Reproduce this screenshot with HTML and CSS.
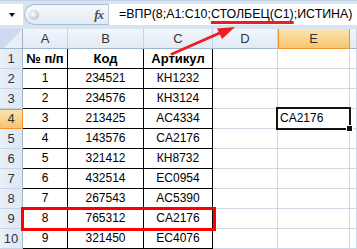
FILE: index.html
```html
<!DOCTYPE html>
<html lang="ru">
<head>
    <meta charset="UTF-8">
    <title>ВПР</title>
    <link rel="stylesheet" href="styles.css">
</head>
<body>
    <div class="fbar">
        <div class="namebox"><span class="drop"></span></div>
        <div class="fx-pill"><span class="grip"></span><span class="fx">fx</span></div>
        <div class="formula">=ВПР(8;A1:C10;<span class="mark">СТОЛБЕЦ(C1)</span>;ИСТИНА)</div>
    </div>

    <div class="sheet">
        <div class="row head">
            <div class="corner"></div>
            <div class="ch">A</div>
            <div class="ch">B</div>
            <div class="ch">C</div>
            <div class="ch">D</div>
            <div class="ch sel">E</div>
            <div class="ch"></div>
        </div>
        <div class="row">
            <div class="rh">1</div>
            <div class="c t b">№ п/п</div>
            <div class="c t b">Код</div>
            <div class="c t b">Артикул</div>
            <div class="c"></div><div class="c"></div><div class="c"></div>
        </div>
        <div class="row">
            <div class="rh">2</div>
            <div class="c t">1</div><div class="c t">234521</div><div class="c t">КН1232</div>
            <div class="c"></div><div class="c"></div><div class="c"></div>
        </div>
        <div class="row">
            <div class="rh">3</div>
            <div class="c t">2</div><div class="c t">234576</div><div class="c t">КН3124</div>
            <div class="c"></div><div class="c"></div><div class="c"></div>
        </div>
        <div class="row">
            <div class="rh sel">4</div>
            <div class="c t">3</div><div class="c t">213425</div><div class="c t">AC4334</div>
            <div class="c"></div><div class="c active">CA2176</div><div class="c"></div>
        </div>
        <div class="row">
            <div class="rh">5</div>
            <div class="c t">4</div><div class="c t">143576</div><div class="c t">CA2176</div>
            <div class="c"></div><div class="c"></div><div class="c"></div>
        </div>
        <div class="row">
            <div class="rh">6</div>
            <div class="c t">5</div><div class="c t">321412</div><div class="c t">КН8732</div>
            <div class="c"></div><div class="c"></div><div class="c"></div>
        </div>
        <div class="row">
            <div class="rh">7</div>
            <div class="c t">6</div><div class="c t">432514</div><div class="c t">EC0954</div>
            <div class="c"></div><div class="c"></div><div class="c"></div>
        </div>
        <div class="row">
            <div class="rh">8</div>
            <div class="c t">7</div><div class="c t">267543</div><div class="c t">AC5390</div>
            <div class="c"></div><div class="c"></div><div class="c"></div>
        </div>
        <div class="row hit">
            <div class="rh">9</div>
            <div class="c t">8</div><div class="c t">765312</div><div class="c t">CA2176</div>
            <div class="c"></div><div class="c"></div><div class="c"></div>
        </div>
        <div class="row">
            <div class="rh">10</div>
            <div class="c t">9</div><div class="c t">321450</div><div class="c t">EC4076</div>
            <div class="c"></div><div class="c"></div><div class="c"></div>
        </div>
    </div>

    <!-- annotation arrow -->
    <svg class="arrow" width="357" height="249" viewBox="0 0 357 249">
        <line x1="172" y1="54" x2="222" y2="32" stroke="#ee1c24" stroke-width="3" stroke-linecap="round"/>
        <polygon points="235,27 217,28.5 222,39" fill="#ee1c24"/>
    </svg>
</body>
</html>
```

FILE: styles.css
```css
body {
    margin: 0;
    width: 357px;
    height: 249px;
    overflow: hidden;
    position: relative;
    background: #fff;
    font-family: "Liberation Sans", Arial, sans-serif;
    color: #000;
}

/* Formula bar */
.fbar {
    display: flex;
    height: 29px;
    box-sizing: border-box;
    padding: 3px 0 4px;
    background: #d9e4f1;
    border-top: 1px solid #c3d3e7;
}

.namebox {
    width: 23px;
    background: #fff;
    position: relative;
}

.drop {
    position: absolute;
    left: 9px;
    top: 9px;
    border-left: 3px solid transparent;
    border-right: 3px solid transparent;
    border-top: 4px solid #111;
}

.fx-pill {
    width: 84px;
    margin-left: 1px;
    display: flex;
    align-items: center;
    justify-content: space-between;
    box-sizing: border-box;
    padding: 0 5px 0 4px;
    border: 1px solid #a7bcd6;
    border-right: none;
    border-radius: 11px 0 0 11px;
    background: linear-gradient(#f7f9fc, #e3eaf3);
}

.grip {
    width: 10px;
    height: 10px;
    border-radius: 50%;
    background: radial-gradient(circle at 40% 40%, #ffffff, #c9ced6 60%, #a9b0ba);
}

.fx {
    font-family: "Liberation Serif", serif;
    font-style: italic;
    font-weight: bold;
    font-size: 13px;
    letter-spacing: -1px;
    color: #4d4d4d;
}

.formula {
    flex: 1;
    background: #fff;
    border-left: 1px solid #b8c9de;
    padding-left: 10px;
    font-size: 12.4px;
    line-height: 21px;
    white-space: nowrap;
    color: #000;
}

.mark {
    text-decoration: underline #ee1c24 3px;
    text-underline-offset: 3px;
}

/* Sheet grid */
.row {
    display: grid;
    grid-template-columns: 23px 45px 76px 69px 65px 72px 1fr;
    height: 20px;
}

.row > div {
    box-sizing: border-box;
    border-right: 1px solid #d0d7e5;
    border-bottom: 1px solid #d0d7e5;
    font-size: 12px;
    line-height: 19px;
    white-space: nowrap;
}

.head > div {
    background: linear-gradient(#f2f6fb, #e2eaf5);
    border-right-color: #c5d3e4;
    border-bottom-color: #9eb6ce;
    text-align: center;
    font-size: 13px;
    color: #333;
}

.head .corner {
    background: linear-gradient(135deg, #cddbee 55%, #e9eff8 55%);
    border-right-color: #9eb6ce;
}

.rh {
    background: linear-gradient(90deg, #eaf0f8, #dfe7f3);
    border-right-color: #9eb6ce !important;
    border-bottom-color: #c5d3e4 !important;
    text-align: center;
    font-size: 13px !important;
    color: #333;
}

.head .sel, .rh.sel {
    background: linear-gradient(#fbe3b0, #f7c66e);
    border-right-color: #f29436;
    border-bottom-color: #f29436;
}

.head .sel {
    box-shadow: inset 1px 0 #f29436;
}

.rh.sel {
    box-shadow: inset 0 1px #f29436;
    border-right-color: #f29436 !important;
    border-bottom-color: #f29436 !important;
}

.c.t {
    text-align: center;
    border-right-color: #000;
    border-bottom-color: #000;
}

.c.b {
    font-weight: bold;
    font-size: 13px;
}

.c.active {
    position: relative;
    padding-left: 2px;
}

.c.active::after {
    content: "";
    position: absolute;
    inset: -2px;
    border: 2px solid #111;
}

.c.active::before {
    content: "";
    position: absolute;
    right: -4px;
    bottom: -4px;
    width: 5px;
    height: 5px;
    background: #111;
    border: 1px solid #fff;
    z-index: 1;
}

.hit {
    position: relative;
}

.hit::after {
    content: "";
    position: absolute;
    left: 21px;
    top: -2px;
    width: 195px;
    height: 24px;
    box-sizing: border-box;
    border: 3px solid #ff0000;
}

.arrow {
    position: absolute;
    left: 0;
    top: 0;
    pointer-events: none;
}
```
